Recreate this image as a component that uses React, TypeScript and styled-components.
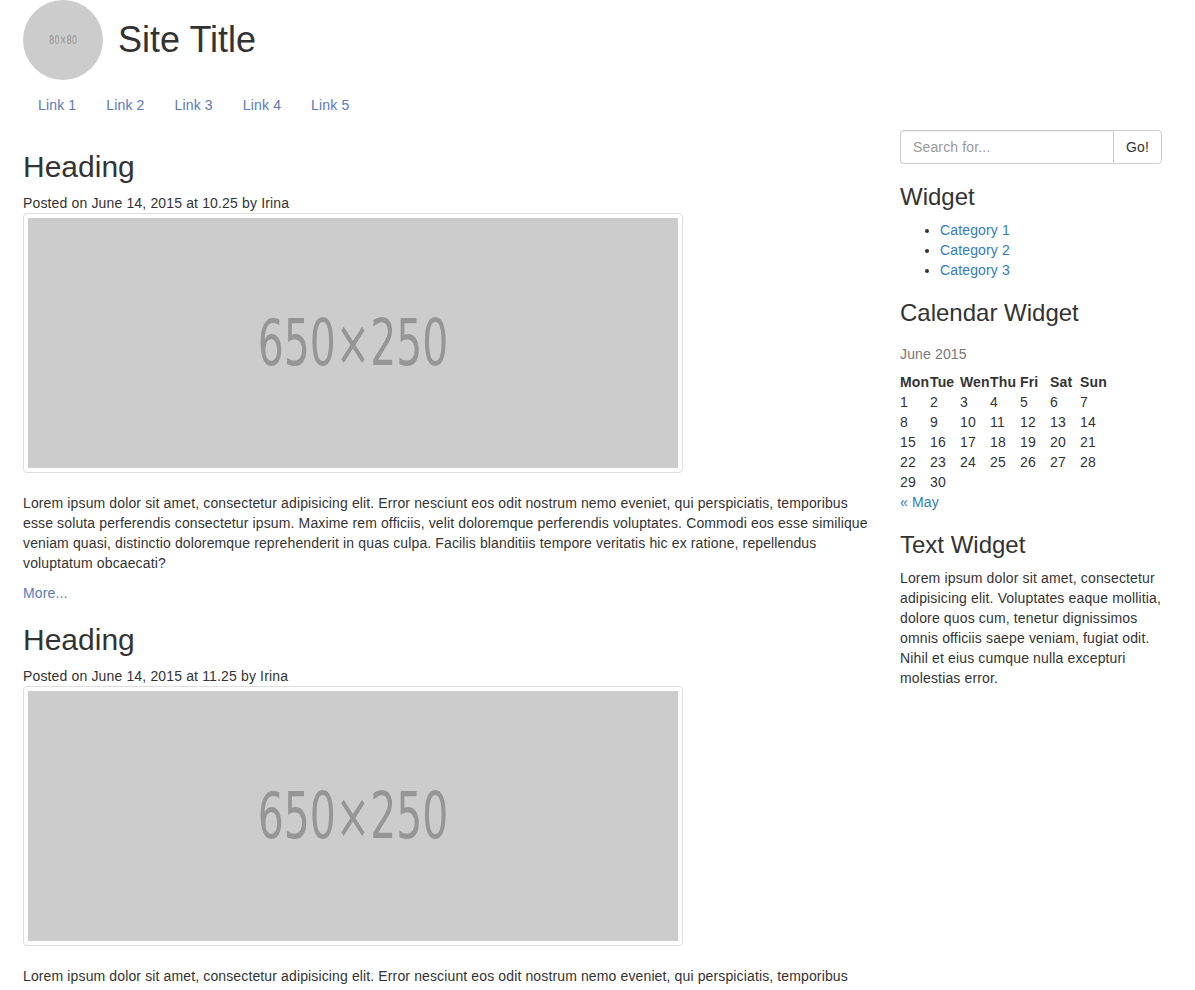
import styled, { createGlobalStyle } from "styled-components"

const GlobalStyle = createGlobalStyle`
  body {
    margin: 0;
    background: #fff;
    color: #333;
    font-family: "Liberation Sans", Arial, Helvetica, sans-serif;
    font-size: 14px;
    line-height: 20px;
    letter-spacing: 0.15px;
  }
`

const Header = styled.header`
  display: flex;
  align-items: center;
  gap: 15px;
  padding-left: 23px;
  height: 80px;
`

const Avatar = styled.div`
  width: 80px;
  height: 80px;
  border-radius: 50%;
  background: #ccc;
  display: flex;
  align-items: center;
  justify-content: center;
`

const PlaceholderLabel = styled.span<{ $size: number }>`
  display: inline-block;
  color: #969696;
  font-family: "DejaVu Sans", sans-serif;
  font-size: ${(p) => p.$size}px;
  letter-spacing: 0;
  transform: scaleX(0.64);
`

const SiteTitle = styled.h1`
  margin: 0;
  font-size: 36px;
  font-weight: 500;
  line-height: 40px;
  letter-spacing: 0;
  color: #333;
`

const Nav = styled.nav`
  display: flex;
  padding-left: 23px;
  margin-top: 5px;
  margin-bottom: 5px;
`

const NavLink = styled.a`
  padding: 10px 15px;
  color: #5a78bd;
  text-decoration: none;
`

const Layout = styled.div`
  display: flex;
  align-items: flex-start;
  gap: 22px;
  padding-left: 23px;
`

const Main = styled.main`
  width: 855px;
  flex: none;
  display: flow-root;
`

const Sidebar = styled.aside`
  width: 262px;
  flex: none;
  display: flow-root;
`

const PostHeading = styled.h2`
  margin: 20px 0 10px;
  font-size: 30px;
  font-weight: 500;
  line-height: 33px;
  letter-spacing: 0;
`

const Meta = styled.div``

const Thumbnail = styled.div`
  width: 650px;
  padding: 4px;
  border: 1px solid #ddd;
  border-radius: 4px;
  margin-bottom: 20px;
`

const Placeholder = styled.div<{ $w: number; $h: number }>`
  width: ${(p) => p.$w}px;
  height: ${(p) => p.$h}px;
  background: #ccc;
  display: flex;
  align-items: center;
  justify-content: center;
`

const Paragraph = styled.p<{ $tight?: boolean }>`
  margin: 0 0 10px;
  letter-spacing: ${(p) => (p.$tight ? "0.13px" : "0.15px")};
`

const MoreLink = styled.a`
  color: #5a78bd;
  text-decoration: none;
`

const SearchGroup = styled.div`
  display: flex;
  height: 34px;
`

const SearchInput = styled.input`
  flex: 1;
  min-width: 0;
  box-sizing: border-box;
  height: 34px;
  padding: 6px 12px;
  border: 1px solid #ccc;
  border-right: none;
  border-radius: 4px 0 0 4px;
  font: inherit;
  letter-spacing: inherit;
  color: #555;
  box-shadow: inset 0 1px 1px rgba(0, 0, 0, 0.075);
  &::placeholder {
    color: #999;
  }
`

const GoButton = styled.button`
  width: 49px;
  height: 34px;
  border: 1px solid #ccc;
  border-radius: 0 4px 4px 0;
  background: #fff;
  color: #333;
  font: inherit;
  letter-spacing: inherit;
`

const WidgetTitle = styled.h3`
  margin: 20px 0 10px;
  font-size: 24px;
  font-weight: 500;
  line-height: 26px;
  letter-spacing: 0;
`

const CategoryList = styled.ul`
  margin: 0 0 10px;
  padding-left: 40px;
`

const CategoryLink = styled.a`
  color: #337ab7;
  text-decoration: none;
`

const Calendar = styled.table`
  border-collapse: collapse;
  border-spacing: 0;
`

const Caption = styled.caption`
  padding: 8px 0;
  text-align: left;
  color: #777;
`

const HeadCell = styled.th`
  width: 30px;
  padding: 0;
  text-align: left;
  font-weight: bold;
`

const DayCell = styled.td`
  padding: 0;
  text-align: left;
`

const PrevMonth = styled.a`
  color: #337ab7;
  text-decoration: none;
`

const posts = [{ time: "10.25" }, { time: "11.25" }]

const lorem =
  "Lorem ipsum dolor sit amet, consectetur adipisicing elit. Error nesciunt eos odit nostrum nemo eveniet, qui perspiciatis, temporibus esse soluta perferendis consectetur ipsum. Maxime rem officiis, velit doloremque perferendis voluptates. Commodi eos esse similique veniam quasi, distinctio doloremque reprehenderit in quas culpa. Facilis blanditiis tempore veritatis hic ex ratione, repellendus voluptatum obcaecati?"

const weeks = [
  [1, 2, 3, 4, 5, 6, 7],
  [8, 9, 10, 11, 12, 13, 14],
  [15, 16, 17, 18, 19, 20, 21],
  [22, 23, 24, 25, 26, 27, 28],
  [29, 30],
]

export default function App() {
  return (
    <>
      <GlobalStyle />
      <Header>
        <Avatar>
          <PlaceholderLabel $size={13}>80×80</PlaceholderLabel>
        </Avatar>
        <SiteTitle>Site Title</SiteTitle>
      </Header>
      <Nav>
        {[1, 2, 3, 4, 5].map((n) => (
          <NavLink key={n} href="#">Link {n}</NavLink>
        ))}
      </Nav>
      <Layout>
        <Main>
          {posts.map((post) => (
            <article key={post.time}>
              <PostHeading>Heading</PostHeading>
              <Meta>Posted on June 14, 2015 at {post.time} by Irina</Meta>
              <Thumbnail>
                <Placeholder $w={650} $h={250}>
                  <PlaceholderLabel $size={64}>650×250</PlaceholderLabel>
                </Placeholder>
              </Thumbnail>
              <Paragraph $tight>{lorem}</Paragraph>
              <MoreLink href="#">More...</MoreLink>
            </article>
          ))}
        </Main>
        <Sidebar>
          <SearchGroup>
            <SearchInput placeholder="Search for..." />
            <GoButton>Go!</GoButton>
          </SearchGroup>

          <WidgetTitle>Widget</WidgetTitle>
          <CategoryList>
            {[1, 2, 3].map((n) => (
              <li key={n}>
                <CategoryLink href="#">Category {n}</CategoryLink>
              </li>
            ))}
          </CategoryList>

          <WidgetTitle>Calendar Widget</WidgetTitle>
          <Calendar>
            <Caption>June 2015</Caption>
            <thead>
              <tr>
                {["Mon", "Tue", "Wen", "Thu", "Fri", "Sat", "Sun"].map((d) => (
                  <HeadCell key={d}>{d}</HeadCell>
                ))}
              </tr>
            </thead>
            <tbody>
              {weeks.map((week, i) => (
                <tr key={i}>
                  {week.map((day) => (
                    <DayCell key={day}>{day}</DayCell>
                  ))}
                </tr>
              ))}
            </tbody>
          </Calendar>
          <PrevMonth href="#">« May</PrevMonth>

          <WidgetTitle>Text Widget</WidgetTitle>
          <Paragraph>
            Lorem ipsum dolor sit amet, consectetur adipisicing elit. Voluptates eaque mollitia,
            dolore quos cum, tenetur dignissimos omnis officiis saepe veniam, fugiat odit. Nihil
            et eius cumque nulla excepturi molestias error.
          </Paragraph>
        </Sidebar>
      </Layout>
    </>
  )
}
